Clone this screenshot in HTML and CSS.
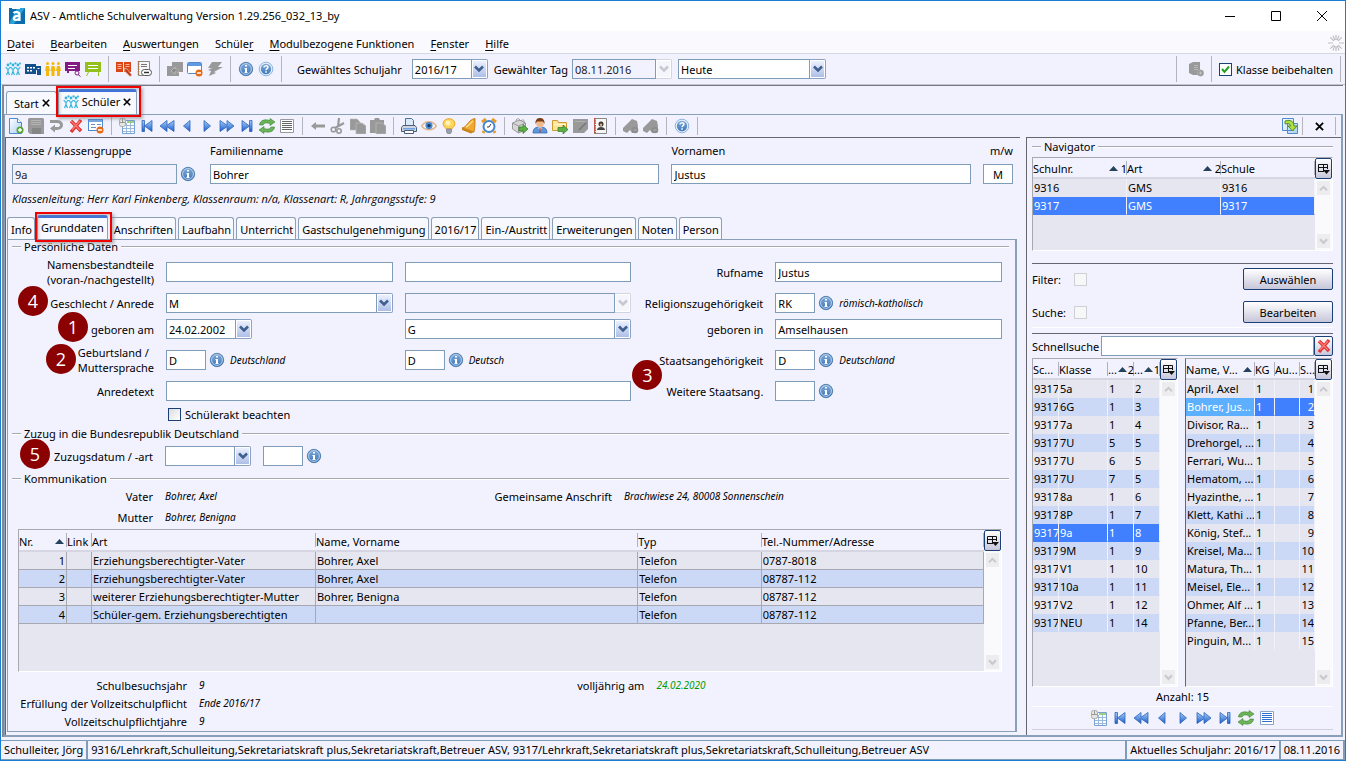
FILE: index.html
```html
<!DOCTYPE html>
<html lang="de">
<head>
<meta charset="utf-8">
<title>ASV - Amtliche Schulverwaltung</title>
<link rel="stylesheet" href="styles.css">
</head>
<body>
<svg class="sprite" aria-hidden="true">
  <defs>
    <linearGradient id="gb" x1="0" y1="0" x2="0" y2="1"><stop offset="0" stop-color="#a6d0fa"/><stop offset="1" stop-color="#1b5cc8"/></linearGradient>
    <linearGradient id="gi" x1="0" y1="0" x2="0" y2="1"><stop offset="0" stop-color="#7fa9d8"/><stop offset="1" stop-color="#3f78bb"/></linearGradient>
    <linearGradient id="gd" x1="0" y1="0" x2="1" y2="1"><stop offset="0" stop-color="#ffffff"/><stop offset="1" stop-color="#a9cff2"/></linearGradient>
  </defs>
  <symbol id="people" viewBox="0 0 16 16"><g fill="#2fb4dc"><circle cx="3" cy="4" r="1.400"/><circle cx="8" cy="4" r="1.400"/><circle cx="13" cy="4" r="1.400"/><circle cx="5.500" cy="2.400" r="1.100"/><circle cx="10.500" cy="2.400" r="1.100"/><circle cx="15" cy="2.400" r="1"/></g><path d="M.7 6l1.600 2h1.400l1.600-2M5.700 6l1.600 2h1.400l1.600-2M10.700 6l1.600 2h1.400l1.600-2M3 8v2.500L1.500 14M3 10.500L4.500 14M8 8v2.500L6.500 14M8 10.500L9.500 14M13 8v2.500L11.500 14M13 10.500l1.500 3.500" fill="none" stroke="#2fb4dc" stroke-width="1.200"/></symbol>
  <symbol id="school" viewBox="0 0 16 16"><path fill="#12508c" d="M0 3h11v2h5v9h-4V9h-1v4H0z"/><path fill="#fff" d="M2 6h2v1.500H2zM5 6h2v1.500H5zM8 6h2v1.500H8zM2 9h2v1.500H2zM5 9h2v1.500H5zM12.500 7h2v1h-2z"/></symbol>
  <symbol id="staff" viewBox="0 0 16 16"><g fill="#f2b90c"><circle cx="2.500" cy="2.500" r="1.500"/><circle cx="8" cy="2.500" r="1.500"/><circle cx="13.500" cy="2.500" r="1.500"/><path d="M1 5h3l1 5H4v5H1v-5H0zM6.500 5h3l1 5h-1v5h-3v-5h-1zM12 5h3l1 5h-1v5h-3v-5h-1z"/></g></symbol>
  <symbol id="board" viewBox="0 0 16 16"><path fill="#841a86" d="M0 1h15v9H0zM2 10h2v2H2z"/><path stroke="#fff" d="M3 4.500h9M3 7.500h7" fill="none"/><circle cx="12" cy="12" r="2" fill="#f2f2ff" stroke="#841a86"/><path d="M13 13.500l2.500 2" stroke="#841a86"/></symbol>
  <symbol id="board2" viewBox="0 0 16 16"><path fill="#93c11c" d="M0 1h16v10h-2v4h-1v-4H4l-2 4H1l2-4H0z"/><path stroke="#fff" d="M3 4.500h10M3 7.500h10" fill="none"/></symbol>
  <symbol id="book" viewBox="0 0 16 16"><path fill="#dc4416" d="M0 1h7v10H0zM8 1h7v10H8z"/><path d="M1.500 3.500h4M1.500 5.500h4M1.500 7.500h4M9.500 3.500h4M9.500 5.500h4" stroke="#f7b49b" fill="none"/><path d="M8 7l3 1 5 6-2 1.500-5-5z" fill="#c03a12" stroke="#f2d2c8" stroke-width=".7"/></symbol>
  <symbol id="notes" viewBox="0 0 16 16"><path fill="#f6f6f6" stroke="#888" d="M2.500 .5h11v14h-11z"/><path stroke="#b0713a" stroke-width="1.500" stroke-dasharray="1.500 1" d="M2.500 0v15"/><path stroke="#777" d="M5 3.500h6M5 5.500h6" fill="none"/><rect x="5.500" y="8.500" width="10" height="6" rx="3" fill="#fff" stroke="#555"/><path stroke="#333" stroke-width="1.500" d="M8 11.500h5"/></symbol>
  <symbol id="stack" viewBox="0 0 16 16"><path fill="#999" d="M5 1h11v10h-4v4H0V5h5z"/><path d="M4 10l4-4v2c3 0 4 1 3 4-1-2-2-2-3-1.500V13z" fill="#888" stroke="#c0c0c0" stroke-width=".8"/></symbol>
  <symbol id="window" viewBox="0 0 16 16"><rect x=".5" y="1.500" width="14" height="11" rx="1" fill="#fff" stroke="#4d8ad2"/><path fill="#5d9ae2" d="M1 2h13v3H1z"/><circle cx="12" cy="12" r="3.500" fill="#e46b15"/><path stroke="#fff" stroke-width="1.500" d="M10 12h4"/></symbol>
  <symbol id="bolt" viewBox="0 0 16 16"><path fill="#999" d="M5 1h10l-4 5h5l-9 5 2 1-7 3 2-5-3-1 4-2H1z"/></symbol>
  <symbol id="info" viewBox="0 0 16 16"><circle cx="8" cy="8" r="6.700" fill="url(#gi)" stroke="#41719f" stroke-width=".8"/><circle cx="8" cy="8" r="5.400" fill="none" stroke="#bcd5f0" stroke-width=".9"/><path stroke="#fff" stroke-width="2" d="M8 4v1.600M8 7v4.500" fill="none"/><path stroke="#fff" d="M6.500 7.500H8M6.500 11.500h3"/></symbol>
  <symbol id="help" viewBox="0 0 16 16"><circle cx="8" cy="8" r="6.800" fill="#e6f0fb" stroke="#76a3d6" stroke-width=".8"/><circle cx="8" cy="8" r="5.200" fill="url(#gi)"/><path d="M6 6.500C6 4.300 10 4.300 10 6.300 10 7.600 8 7.600 8 9.200" fill="none" stroke="#fff" stroke-width="1.400"/><path fill="#fff" d="M7.200 10.300h1.600v1.500H7.200z"/></symbol>
  <symbol id="srv" viewBox="0 0 16 16"><path fill="#999" d="M1 3l4-2h7v13H5l-4-2z"/><path stroke="#b8b8b8" d="M6 4.500h4M6 6.500h4M6 8.500h4"/><circle cx="12.500" cy="12" r="3.200" fill="#999" stroke="#b8b8b8" stroke-width=".6"/><path stroke="#c4c4c4" d="M12.500 10.500v3M11 12h3"/></symbol>
  <symbol id="new" viewBox="0 0 16 16"><path fill="url(#gd)" stroke="#4d8ad2" d="M1.500 .5h8l4 4v11h-12z"/><path fill="#fff" stroke="#4d8ad2" d="M9.500 .5v4h4"/><circle cx="12" cy="12" r="3.500" fill="#57a336"/><path stroke="#fff" stroke-width="1.400" d="M12 10v4M10 12h4"/></symbol>
  <symbol id="save" viewBox="0 0 16 16"><path fill="#999" d="M0 1l1-1h14l1 1v15H2l-2-2z"/><path stroke="#b5b5b5" d="M3 2.500h10M3 4.500h10M3 6.500h10"/><path fill="#858585" d="M4 10h9v6H4z"/></symbol>
  <symbol id="undo" viewBox="0 0 16 16"><path fill="none" stroke="#999" stroke-width="3" d="M2 3.500h7c6 0 6 7 0 7H6"/><path fill="#999" d="M7 6.500v8l-5-4z"/></symbol>
  <symbol id="del" viewBox="0 0 16 16"><path d="M3 3l10 10M13 2L3 14" stroke="#e03030" stroke-width="3.400"/><path d="M3 3l9 9M12 3L4 12" stroke="#ff7a70" stroke-width="1.400"/></symbol>
  <symbol id="form" viewBox="0 0 16 16"><rect x=".5" y="1.500" width="14" height="11" fill="#fff" stroke="#4d8ad2"/><path fill="#76a9e3" d="M1 2h13v2H1z"/><path stroke="#6a8fc0" d="M3 6.500h4M9 6.500h4M3 9.500h5"/><circle cx="12" cy="12" r="3.500" fill="#e46b15"/><path stroke="#fff" stroke-width="1.500" d="M10 12h4"/></symbol>
  <symbol id="sheet" viewBox="0 0 16 16"><path fill="#fff" stroke="#78a1d6" d="M3.500 2.500h12v13h-12z"/><path fill="#9dcf83" d="M8 3h7v2H8z"/><path stroke="#9ab9e0" d="M4 7.500h11M4 10.500h11M4 13.500h11M7.500 5v10M11.500 5v10"/><rect x=".5" y=".5" width="6" height="8" rx="2" fill="#e6e6e0" stroke="#aaa"/><path stroke="#999" d="M3.500 1v3M1 4.500h5"/></symbol>
  <symbol id="first" viewBox="0 0 16 16"><path fill="url(#gb)" stroke="#2c62bd" stroke-width=".8" d="M3 2.500h2.500V8L13 2.500v11L5.500 8v5.500H3z"/></symbol>
  <symbol id="rew" viewBox="0 0 16 16"><path fill="url(#gb)" stroke="#2c62bd" stroke-width=".8" d="M8 2.500v4.800L15 2.500v11L8 8.700v4.800L1 8z"/></symbol>
  <symbol id="prev" viewBox="0 0 16 16"><path fill="url(#gb)" stroke="#2c62bd" stroke-width=".8" d="M11 2.500v11L4.500 8z"/></symbol>
  <symbol id="next" viewBox="0 0 16 16"><path fill="url(#gb)" stroke="#2c62bd" stroke-width=".8" d="M5 2.500v11L11.500 8z"/></symbol>
  <symbol id="ff" viewBox="0 0 16 16"><path fill="url(#gb)" stroke="#2c62bd" stroke-width=".8" d="M8 2.500v4.800L1 2.500v11l7-4.800v4.800L15 8z"/></symbol>
  <symbol id="last" viewBox="0 0 16 16"><path fill="url(#gb)" stroke="#2c62bd" stroke-width=".8" d="M13 2.500h-2.500V8L3 2.500v11L10.500 8v5.500H13z"/></symbol>
  <symbol id="refresh" viewBox="0 0 16 16"><path fill="#6bb558" stroke="#3d8230" stroke-width=".6" d="M.5 7C1 2 6 1 11 2.500V.5L16 4l-5 3.500V5.500C8 4.500 5 4.500 4 7z"/><path fill="#6bb558" stroke="#3d8230" stroke-width=".6" d="M15.500 9C15 14 10 15 5 13.500v2L0 12l5-3.500v2c3 1 6 1 7-1.500z"/></symbol>
  <symbol id="list" viewBox="0 0 16 16"><path fill="#fff" stroke="#999" d="M1.500 1.500h13v13h-13z"/><path stroke="#666" d="M3 3.500h10M3 5.500h10M3 7.500h10M3 9.500h10M3 11.500h10"/></symbol>
  <symbol id="listb" viewBox="0 0 16 16"><path fill="#fff" stroke="#8aa4ca" d="M1.500 1.500h13v13h-13z"/><path stroke="#2d6fd0" d="M3 3.500h10M3 5.500h10M3 7.500h10M3 9.500h10M3 11.500h10"/></symbol>
  <symbol id="back" viewBox="0 0 16 16"><path fill="#999" d="M1 8l5-4v2.500h9v3H6V12z"/></symbol>
  <symbol id="cut" viewBox="0 0 16 16"><path fill="none" stroke="#999" stroke-width="2.200" d="M9 0L8 9M14 5L5 10"/><circle cx="3.500" cy="11.500" r="2.300" fill="none" stroke="#999" stroke-width="1.600"/><circle cx="9" cy="13" r="2.200" fill="none" stroke="#999" stroke-width="1.600"/></symbol>
  <symbol id="copy" viewBox="0 0 16 16"><path fill="#999" stroke="#b5b5b5" stroke-width=".6" d="M0 1h7l3 3v8H0z"/><path fill="#999" stroke="#b9b9b9" stroke-width=".8" d="M6 5h6l4 3v8H6z"/></symbol>
  <symbol id="paste" viewBox="0 0 16 16"><path fill="#999" d="M0 2h4l1-2h4l1 2h4v13H0z"/><path fill="#999" stroke="#b9b9b9" stroke-width=".8" d="M6 5h6l4 3v8H6z"/></symbol>
  <symbol id="print" viewBox="0 0 16 16"><path fill="#dbeafa" stroke="#4c6f9c" d="M4.500 .5h6l2 2v5h-8z"/><path fill="#cfd6e0" stroke="#4c5d78" d="M2 7.500h12l1.500 2v4H.5v-4z"/><path fill="#6ea4e2" d="M2 10h12v1.500H2z"/><path fill="#fff" stroke="#4c5d78" d="M3.500 12.500h9v3h-9z"/></symbol>
  <symbol id="eye" viewBox="0 0 16 16"><path fill="#fff" stroke="#e2b592" stroke-width="1.600" d="M.8 8C4 2.500 12 2.500 15.200 8 12 13 4 13 .8 8z"/><circle cx="8" cy="7.600" r="3.600" fill="#4c8ad0"/><circle cx="8" cy="7.600" r="1.600" fill="#16335c"/></symbol>
  <symbol id="bulb" viewBox="0 0 16 16"><path fill="#ffd65c" stroke="#e8a526" d="M5.500 11C-1 6 3 .7 8 .7S17 6 10.500 11z"/><circle cx="7" cy="5" r="2.500" fill="#fff3b8"/><path fill="#99a1ad" stroke="#697280" stroke-width=".6" d="M5.500 11h5v3l-1 1.500h-3l-1-1.500z"/></symbol>
  <symbol id="bell" viewBox="0 0 16 16"><path fill="#f1a82c" stroke="#b8720d" stroke-width=".8" d="M1 10c5-1 6-7 11-9l2-.5V3c0 4 0 6-1 11z"/><path fill="#c9811a" d="M1 10l12 4-3 1.500L1 12z"/><path stroke="#ffdf8a" stroke-width="1.500" d="M5 9c3-1 4-4 7-6" fill="none"/></symbol>
  <symbol id="clock" viewBox="0 0 16 16"><path stroke="#e99b28" stroke-width="3" d="M1 4l4-3M15 4l-4-3M3 13l-1 2M13 13l1 2"/><circle cx="8" cy="8.500" r="5.500" fill="#fff" stroke="#4388ce" stroke-width="2"/><path stroke="#335" fill="none" d="M10 6L8 9H6"/></symbol>
  <symbol id="boxgo" viewBox="0 0 16 16"><path fill="#d6d6d6" stroke="#888" stroke-width=".8" d="M.5 5l7-3 6 3v7l-7 3-6-4z"/><path stroke="#999" fill="none" d="M.5 5l6 3 7-3M6.500 8v7M4 3c0-3 4-3 4 0M9 3c1-2 4-1 3 1"/><path fill="#5cb046" stroke="#2f7a22" stroke-width=".7" d="M7 9h4V6.500l5 4.500-5 4.500V13H7z"/></symbol>
  <symbol id="user" viewBox="0 0 16 16"><path fill="#5b98dc" stroke="#2b5f9f" stroke-width=".7" d="M1 15c0-5 3-6 7-6s7 1 7 6z"/><circle cx="8" cy="5.500" r="3.800" fill="#f0b98d"/><path fill="#7a3c14" d="M3.500 6C3 1 6 0 8 0s5 1 4.500 6L11 3.500H5z"/><path fill="#fff" d="M6 9.500h4L8 13z"/><path stroke="#c4261c" stroke-width="1.200" d="M8 10v4"/></symbol>
  <symbol id="foldgo" viewBox="0 0 16 16"><path fill="#ffe59a" stroke="#cf9b2c" d="M.5 2.500h5l1 2h8v8H.5z"/><path stroke="#fff5d0" d="M2 6.500h12"/><path fill="#5cb046" stroke="#2f7a22" stroke-width=".7" d="M6 9.500h5V7l5 4.500-5 4.500v-2.500H6z"/></symbol>
  <symbol id="edit" viewBox="0 0 16 16"><path fill="#999" d="M1 1h15v10l-4 4H1z"/><path stroke="#777" stroke-width="1.600" d="M7 12l7-7"/><path stroke="#b1b1b1" d="M3 3.500h10"/></symbol>
  <symbol id="addr" viewBox="0 0 16 16"><path fill="#f6f6f6" stroke="#888" d="M2.500 .5h12v15h-12z"/><path stroke="#d8472a" stroke-width="2" stroke-dasharray="1.500 .8" d="M3 0v16"/><circle cx="9" cy="6" r="2.500" fill="#333"/><path fill="#444" d="M5 12c0-4 8-4 8 0z"/><circle cx="9" cy="6.700" r="1.300" fill="#e2a980"/></symbol>
  <symbol id="tag" viewBox="0 0 16 16"><path fill="#999" d="M0 10l4-4 5-5 5 2 1 5-1 7H9l-2-3-3 3-4-2z"/><circle cx="12" cy="12" r="3.300" fill="#8d8d8d"/><path stroke="#b5b5b5" d="M10.500 12h3"/></symbol>
  <symbol id="export" viewBox="0 0 16 16"><path fill="url(#gd)" stroke="#4d8ad2" d="M.5 .5h11v12H.5zM5.500 5.500h10v10h-10z"/><path fill="#b4dc3a" stroke="#3a8a22" stroke-width=".9" d="M3 3c6-2 9 1 9 5h3l-4.500 5L6 8h2.500c0-2-2-3-5.500-2z"/></symbol>
  <symbol id="chev" viewBox="0 0 10 8"><path fill="none" stroke="currentColor" stroke-width="2.600" d="M1 1.500l4 4 4-4"/></symbol>
  <symbol id="chevup" viewBox="0 0 10 8"><path fill="none" stroke="currentColor" stroke-width="2.200" d="M1 6l4-4 4 4"/></symbol>
  <symbol id="colctl" viewBox="0 0 12 12"><path fill="none" stroke="#111" d="M.5 8.500v-7h9V6M5.500 1v7.500M0 4.500h10M0 8.500h6"/><path fill="#111" d="M5 7h7l-3.500 4z"/></symbol>
  <symbol id="sort" viewBox="0 0 9 5"><path fill="#24425c" d="M0 5l4.500-5L9 5z"/></symbol>
  <symbol id="x" viewBox="0 0 10 10"><path stroke="currentColor" stroke-width="2" d="M1 1l8 8M9 1L1 9"/></symbol>
</svg>

<div class="window">
  <header class="titlebar">
    <svg class="logo" viewBox="0 0 16 16"><path fill="#0d6cab" d="M0 0h16v16H0z"/><path fill="#2ba1d8" d="M8 0h8L5 16H0z"/><path fill="#fff" d="M3 0h8v1H3z"/><path d="M4.500 5C6 3.500 10.500 3.500 10.500 6.500V13M10.500 8C4 7.500 3.500 12 7 12c2 0 3.500-1 3.500-2.500" stroke="#fff" stroke-width="2.200" fill="none"/></svg>
    <h1>ASV - Amtliche Schulverwaltung Version 1.29.256_032_13_by</h1>
    <div class="winbtns">
      <button aria-label="Minimieren"><svg viewBox="0 0 10 10"><path stroke="#000" d="M0 5.500h10"/></svg></button>
      <button aria-label="Maximieren"><svg viewBox="0 0 10 10"><path fill="none" stroke="#000" d="M.5 .5h9v9h-9z"/></svg></button>
      <button aria-label="Schließen"><svg viewBox="0 0 10 10"><path stroke="#000" d="M0 0l10 10M10 0L0 10"/></svg></button>
    </div>
  </header>
  <nav class="menubar">
    <a href="#"><u>D</u>atei</a><a href="#"><u>B</u>earbeiten</a><a href="#"><u>A</u>uswertungen</a><a href="#">Schüle<u>r</u></a><a href="#"><u>M</u>odulbezogene Funktionen</a><a href="#"><u>F</u>enster</a><a href="#"><u>H</u>ilfe</a>
    <svg class="spinner" viewBox="0 0 16 16"><path stroke="#bdbdc2" stroke-width="1.200" d="M8 0v5M8 11v5M0 8h5M11 8h5M2.300 2.300l3.500 3.500M10.200 10.200l3.500 3.500M13.700 2.300l-3.500 3.500M5.800 10.200l-3.500 3.500M5 .6l1.800 4.600M9.200 10.800L11 15.400M11 .6L9.200 5.200M6.800 10.800L5 15.400"/></svg>
  </nav>
  <div class="mainbar">
    <button class="ib" aria-label="Schüler"><svg><use href="#people"/></svg></button>
    <button class="ib" aria-label="Schule"><svg><use href="#school"/></svg></button>
    <button class="ib" aria-label="Lehrer"><svg><use href="#staff"/></svg></button>
    <button class="ib" aria-label="Klassen"><svg><use href="#board"/></svg></button>
    <button class="ib" aria-label="Unterricht"><svg><use href="#board2"/></svg></button>
    <i class="sep"></i>
    <button class="ib" aria-label="Buch"><svg><use href="#book"/></svg></button>
    <button class="ib" aria-label="Notizen"><svg><use href="#notes"/></svg></button>
    <i class="sep"></i>
    <button class="ib" aria-label="Stapel"><svg><use href="#stack"/></svg></button>
    <button class="ib" aria-label="Fenster schließen"><svg><use href="#window"/></svg></button>
    <button class="ib" aria-label="Blitz"><svg><use href="#bolt"/></svg></button>
    <i class="sep"></i>
    <button class="ib" aria-label="Info"><svg><use href="#info"/></svg></button>
    <button class="ib" aria-label="Hilfe"><svg><use href="#help"/></svg></button>
    <i class="sep"></i>
    <label class="yearlabel" for="jahr">Gewähltes Schuljahr</label>
    <span class="combo year"><select id="jahr"><option>2016/17</option></select><span class="arrow"><svg><use href="#chev"/></svg></span></span>
    <label class="daylabel" for="tag-feld">Gewählter Tag</label>
    <span class="combo day off"><input id="tag-feld" value="08.11.2016" disabled><button class="arrow" disabled aria-label="Kalender"><svg><use href="#chev"/></svg></button></span>
    <span class="combo today"><select aria-label="Tag"><option>Heute</option></select><span class="arrow"><svg><use href="#chev"/></svg></span></span>
    <i class="sep push"></i>
    <button class="ib server" aria-label="Server"><svg><use href="#srv"/></svg></button>
    <i class="sep"></i>
    <label class="keep"><input type="checkbox" class="cb" checked>Klasse beibehalten</label>
    <i class="sep end"></i>
  </div>

  <main class="desk">
    <div class="doctabs">
      <div class="doctab">Start <svg><use href="#x"/></svg></div>
      <div class="doctab active"><svg class="pic"><use href="#people"/></svg>Schüler <svg><use href="#x"/></svg><i class="redbox"></i></div>
    </div>
    <div class="frame">
      <div class="modbar">
        <button class="ib" aria-label="Neu"><svg><use href="#new"/></svg></button>
        <button class="ib" aria-label="Speichern"><svg><use href="#save"/></svg></button>
        <button class="ib" aria-label="Rückgängig"><svg><use href="#undo"/></svg></button>
        <button class="ib" aria-label="Löschen"><svg><use href="#del"/></svg></button>
        <button class="ib" aria-label="Formular"><svg><use href="#form"/></svg></button>
        <i class="sep"></i>
        <button class="ib" aria-label="Tabelle"><svg><use href="#sheet"/></svg></button>
        <button class="ib" aria-label="Erster"><svg><use href="#first"/></svg></button>
        <button class="ib" aria-label="Schnell zurück"><svg><use href="#rew"/></svg></button>
        <button class="ib" aria-label="Zurück"><svg><use href="#prev"/></svg></button>
        <button class="ib" aria-label="Weiter"><svg><use href="#next"/></svg></button>
        <button class="ib" aria-label="Schnell weiter"><svg><use href="#ff"/></svg></button>
        <button class="ib" aria-label="Letzter"><svg><use href="#last"/></svg></button>
        <button class="ib" aria-label="Aktualisieren"><svg><use href="#refresh"/></svg></button>
        <button class="ib" aria-label="Liste"><svg><use href="#list"/></svg></button>
        <i class="sep"></i>
        <button class="ib" aria-label="Pfeil"><svg><use href="#back"/></svg></button>
        <button class="ib" aria-label="Ausschneiden"><svg><use href="#cut"/></svg></button>
        <button class="ib" aria-label="Kopieren"><svg><use href="#copy"/></svg></button>
        <button class="ib" aria-label="Einfügen"><svg><use href="#paste"/></svg></button>
        <i class="sep"></i>
        <button class="ib" aria-label="Drucken"><svg><use href="#print"/></svg></button>
        <button class="ib" aria-label="Vorschau"><svg><use href="#eye"/></svg></button>
        <button class="ib" aria-label="Tipp"><svg><use href="#bulb"/></svg></button>
        <button class="ib" aria-label="Glocke"><svg><use href="#bell"/></svg></button>
        <button class="ib" aria-label="Wecker"><svg><use href="#clock"/></svg></button>
        <i class="sep"></i>
        <button class="ib" aria-label="Paket"><svg><use href="#boxgo"/></svg></button>
        <button class="ib" aria-label="Person"><svg><use href="#user"/></svg></button>
        <button class="ib" aria-label="Ordner"><svg><use href="#foldgo"/></svg></button>
        <button class="ib" aria-label="Bearbeiten"><svg><use href="#edit"/></svg></button>
        <button class="ib" aria-label="Adressbuch"><svg><use href="#addr"/></svg></button>
        <i class="sep"></i>
        <button class="ib" aria-label="Marke hinzufügen"><svg><use href="#tag"/></svg></button>
        <button class="ib" aria-label="Marke entfernen"><svg><use href="#tag"/></svg></button>
        <i class="sep"></i>
        <button class="ib" aria-label="Hilfe"><svg><use href="#help"/></svg></button>
        <i class="sep"></i>
        <button class="ib push" aria-label="Export"><svg><use href="#export"/></svg></button>
        <i class="sep tight"></i>
        <button class="ib close" aria-label="Schließen"><svg><use href="#x"/></svg></button>
        <i class="sep tight"></i>
      </div>

      <div class="split">
        <section class="detail">
          <div class="head">
            <label for="klasse">Klasse / Klassengruppe</label><label for="fam">Familienname</label><label for="vor">Vornamen</label><label for="mw" class="right">m/w</label>
            <span class="withinfo"><input id="klasse" class="grow" value="9a" readonly><svg class="inf"><use href="#info"/></svg></span>
            <input id="fam" value="Bohrer"><input id="vor" value="Justus"><input id="mw" class="center" value="M">
          </div>
          <p class="note">Klassenleitung: Herr Karl Finkenberg, Klassenraum: n/a, Klassenart: R, Jahrgangsstufe: 9</p>
          <div class="tabs">
            <button>Info</button><button class="active">Grunddaten<i class="redbox"></i></button><button>Anschriften</button><button>Laufbahn</button><button>Unterricht</button><button>Gastschulgenehmigung</button><button>2016/17</button><button>Ein-/Austritt</button><button>Erweiterungen</button><button>Noten</button><button>Person</button>
          </div>
          <div class="sheet">
            <h2 class="group">Persönliche Daten</h2>
            <div class="form">
              <label for="nb1">Namensbestandteile<br>(voran-/nachgestellt)</label><input id="nb1"><input aria-label="nachgestellt"><label for="ruf">Rufname</label><input id="ruf" value="Justus">

              <label for="ges"><b class="num n4">4</b>Geschlecht / Anrede</label>
              <span class="combo"><select id="ges"><option>M</option></select><span class="arrow"><svg><use href="#chev"/></svg></span></span>
              <span class="combo off"><select aria-label="Anrede" disabled><option></option></select><span class="arrow"><svg><use href="#chev"/></svg></span></span>
              <label for="rel">Religionszugehörigkeit</label>
              <span class="code"><input id="rel" value="RK"><svg class="inf"><use href="#info"/></svg><em>römisch-katholisch</em></span>

              <label for="geb"><b class="num n1">1</b>geboren am</label>
              <span class="combo date"><input id="geb" value="24.02.2002"><button class="arrow" aria-label="Kalender"><svg><use href="#chev"/></svg></button></span>
              <span class="combo"><select aria-label="Art"><option>G</option></select><span class="arrow"><svg><use href="#chev"/></svg></span></span>
              <label for="ort">geboren in</label><input id="ort" value="Amselhausen">

              <label for="land"><b class="num n2">2</b><span class="two">Geburtsland /<br>Muttersprache</span></label>
              <span class="code"><input id="land" value="D"><svg class="inf"><use href="#info"/></svg><em>Deutschland</em></span>
              <span class="code"><input aria-label="Muttersprache" value="D"><svg class="inf"><use href="#info"/></svg><em>Deutsch</em></span>
              <label for="sta">Staatsangehörigkeit</label>
              <span class="code"><input id="sta" value="D"><svg class="inf"><use href="#info"/></svg><em>Deutschland</em></span>

              <label for="anr">Anredetext</label><input id="anr" class="wide">
              <label for="wst"><b class="num n3">3</b>Weitere Staatsang.</label>
              <span class="code"><input id="wst"><svg class="inf"><use href="#info"/></svg></span>

              <label class="akt"><input type="checkbox" class="cb">Schülerakt beachten</label>
            </div>
            <h2 class="group">Zuzug in die Bundesrepublik Deutschland</h2>
            <div class="zuzug">
              <label for="zuz"><b class="num n5">5</b>Zuzugsdatum / -art</label>
              <span class="combo date"><input id="zuz"><button class="arrow" aria-label="Kalender"><svg><use href="#chev"/></svg></button></span>
              <span class="code"><input aria-label="Zuzugsart"><svg class="inf"><use href="#info"/></svg></span>
            </div>
            <h2 class="group">Kommunikation</h2>
            <div class="parents">
              <span>Vater</span><em>Bohrer, Axel</em><span>Gemeinsame Anschrift</span><em>Brachwiese 24, 80008 Sonnenschein</em>
              <span>Mutter</span><em>Bohrer, Benigna</em>
            </div>
            <div class="grid kom">
              <div class="cells">
                <table>
                  <colgroup><col class="w48"><col class="w25"><col class="c-art"><col class="c-name"><col class="c-typ"><col></colgroup>
                  <thead><tr><th><span>Nr.<svg><use href="#sort"/></svg></span></th><th>Link</th><th>Art</th><th>Name, Vorname</th><th>Typ</th><th>Tel.-Nummer/Adresse</th></tr></thead>
                  <tbody>
                    <tr><td class="right">1</td><td></td><td>Erziehungsberechtigter-Vater</td><td>Bohrer, Axel</td><td>Telefon</td><td>0787-8018</td></tr>
                    <tr><td class="right">2</td><td></td><td>Erziehungsberechtigter-Vater</td><td>Bohrer, Axel</td><td>Telefon</td><td>08787-112</td></tr>
                    <tr><td class="right">3</td><td></td><td>weiterer Erziehungsberechtigter-Mutter</td><td>Bohrer, Benigna</td><td>Telefon</td><td>08787-112</td></tr>
                    <tr><td class="right">4</td><td></td><td>Schüler-gem. Erziehungsberechtigten</td><td></td><td>Telefon</td><td>08787-112</td></tr>
                  </tbody>
                </table>
              </div>
              <div class="bar"><button class="ctl" aria-label="Spalten"><svg><use href="#colctl"/></svg></button><button class="sc" aria-label="Auf"><svg><use href="#chevup"/></svg></button><button class="sc down" aria-label="Ab"><svg><use href="#chev"/></svg></button></div>
            </div>
            <div class="facts">
              <span>Schulbesuchsjahr</span><em>9</em><span>volljährig am</span><em class="green">24.02.2020</em>
              <span>Erfüllung der Vollzeitschulpflicht</span><em>Ende 2016/17</em><span></span><span></span>
              <span>Vollzeitschulpflichtjahre</span><em>9</em>
            </div>
          </div>
        </section>

        <aside class="side">
          <h2 class="group">Navigator</h2>
          <div class="grid nav">
            <div class="cells">
              <table class="plain">
                <thead><tr><th><span>Schulnr.<svg><use href="#sort"/></svg>1</span></th><th><span>Art<svg><use href="#sort"/></svg>2</span></th><th>Schule</th></tr></thead>
                <tbody><tr><td>9316</td><td>GMS</td><td>9316</td></tr><tr class="sel"><td>9317</td><td>GMS</td><td>9317</td></tr></tbody>
              </table>
            </div>
            <div class="bar"><button class="ctl" aria-label="Spalten"><svg><use href="#colctl"/></svg></button><button class="sc" aria-label="Auf"><svg><use href="#chevup"/></svg></button><button class="sc down" aria-label="Ab"><svg><use href="#chev"/></svg></button></div>
          </div>
          <div class="filters">
            <label for="fil">Filter:</label><input type="checkbox" class="cb off" id="fil" disabled><button class="push">Auswählen</button>
            <label for="suc">Suche:</label><input type="checkbox" class="cb off" id="suc" disabled><button class="push">Bearbeiten</button>
          </div>
          <div class="quick"><label for="schnell">Schnellsuche</label><input id="schnell" class="grow"><button class="clear" aria-label="Leeren"><svg><use href="#del"/></svg></button></div>
          <div class="lists">
            <div class="grid kl">
              <div class="cells">
                <table class="plain">
                  <colgroup><col class="w26"><col><col class="w26"><col class="w26"></colgroup>
                  <thead><tr><th>Sc...</th><th>Klasse</th><th><span class="tightsort">...<svg><use href="#sort"/></svg>2</span></th><th><span class="tightsort">...<svg><use href="#sort"/></svg>1</span></th></tr></thead>
                  <tbody>
                    <tr><td>9317</td><td>5a</td><td>1</td><td>2</td></tr>
                    <tr><td>9317</td><td>6G</td><td>1</td><td>3</td></tr>
                    <tr><td>9317</td><td>7a</td><td>1</td><td>4</td></tr>
                    <tr><td>9317</td><td>7U</td><td>5</td><td>5</td></tr>
                    <tr><td>9317</td><td>7U</td><td>6</td><td>5</td></tr>
                    <tr><td>9317</td><td>7U</td><td>7</td><td>5</td></tr>
                    <tr><td>9317</td><td>8a</td><td>1</td><td>6</td></tr>
                    <tr><td>9317</td><td>8P</td><td>1</td><td>7</td></tr>
                    <tr class="sel"><td>9317</td><td>9a</td><td>1</td><td>8</td></tr>
                    <tr><td>9317</td><td>9M</td><td>1</td><td>9</td></tr>
                    <tr><td>9317</td><td>V1</td><td>1</td><td>10</td></tr>
                    <tr><td>9317</td><td>10a</td><td>1</td><td>11</td></tr>
                    <tr><td>9317</td><td>V2</td><td>1</td><td>12</td></tr>
                    <tr><td>9317</td><td>NEU</td><td>1</td><td>14</td></tr>
                  </tbody>
                </table>
              </div>
              <div class="bar"><button class="ctl" aria-label="Spalten"><svg><use href="#colctl"/></svg></button><button class="sc" aria-label="Auf"><svg><use href="#chevup"/></svg></button><button class="sc down" aria-label="Ab"><svg><use href="#chev"/></svg></button></div>
            </div>
            <div class="grid pu">
              <div class="cells">
                <table class="plain">
                  <colgroup><col><col class="w20"><col class="w25"><col class="w15"></colgroup>
                  <thead><tr><th><span>Name, V...<svg><use href="#sort"/></svg></span></th><th>KG</th><th>Au...</th><th>S...</th></tr></thead>
                  <tbody>
                    <tr><td>April, Axel</td><td>1</td><td></td><td>1</td></tr>
                    <tr class="sel"><td class="focus">Bohrer, Jus...</td><td>1</td><td></td><td>2</td></tr>
                    <tr><td>Divisor, Ra...</td><td>1</td><td></td><td>3</td></tr>
                    <tr><td>Drehorgel, ...</td><td>1</td><td></td><td>4</td></tr>
                    <tr><td>Ferrari, Wu...</td><td>1</td><td></td><td>5</td></tr>
                    <tr><td>Hematom, ...</td><td>1</td><td></td><td>6</td></tr>
                    <tr><td>Hyazinthe, ...</td><td>1</td><td></td><td>7</td></tr>
                    <tr><td>Klett, Kathi ...</td><td>1</td><td></td><td>8</td></tr>
                    <tr><td>König, Stef...</td><td>1</td><td></td><td>9</td></tr>
                    <tr><td>Kreisel, Ma...</td><td>1</td><td></td><td>10</td></tr>
                    <tr><td>Matura, Th...</td><td>1</td><td></td><td>11</td></tr>
                    <tr><td>Meisel, Ele...</td><td>1</td><td></td><td>12</td></tr>
                    <tr><td>Ohmer, Alf ...</td><td>1</td><td></td><td>13</td></tr>
                    <tr><td>Pfanne, Ber...</td><td>1</td><td></td><td>14</td></tr>
                    <tr><td>Pinguin, M...</td><td>1</td><td></td><td>15</td></tr>
                  </tbody>
                </table>
              </div>
              <div class="bar"><button class="ctl" aria-label="Spalten"><svg><use href="#colctl"/></svg></button><button class="sc" aria-label="Auf"><svg><use href="#chevup"/></svg></button><button class="sc down" aria-label="Ab"><svg><use href="#chev"/></svg></button></div>
            </div>
          </div>
          <p class="count">Anzahl: 15</p>
          <div class="navbar">
            <button class="ib" aria-label="Tabelle"><svg><use href="#sheet"/></svg></button>
            <button class="ib" aria-label="Erster"><svg><use href="#first"/></svg></button>
            <button class="ib" aria-label="Schnell zurück"><svg><use href="#rew"/></svg></button>
            <button class="ib" aria-label="Zurück"><svg><use href="#prev"/></svg></button>
            <button class="ib" aria-label="Weiter"><svg><use href="#next"/></svg></button>
            <button class="ib" aria-label="Schnell weiter"><svg><use href="#ff"/></svg></button>
            <button class="ib" aria-label="Letzter"><svg><use href="#last"/></svg></button>
            <button class="ib" aria-label="Aktualisieren"><svg><use href="#refresh"/></svg></button>
            <button class="ib" aria-label="Liste"><svg><use href="#listb"/></svg></button>
          </div>
        </aside>
      </div>
    </div>
  </main>
  <footer class="status"><span>Schulleiter, Jörg</span><span class="grow">9316/Lehrkraft,Schulleitung,Sekretariatskraft plus,Sekretariatskraft,Betreuer ASV, 9317/Lehrkraft,Sekretariatskraft plus,Sekretariatskraft,Schulleitung,Betreuer ASV</span><span>Aktuelles Schuljahr: 2016/17</span><span>08.11.2016</span></footer>
</div>
</body>
</html>
```

FILE: styles.css
```css
*, ::before, ::after { box-sizing: border-box; }
body, h1, h2, p { margin: 0; font-weight: normal; }
body {
  font: 11px/15px "Noto Sans", "Open Sans", sans-serif;
  color: #000;
  background: #f2f2ff;
}
input, select, button { font: inherit; color: inherit; margin: 0; min-width: 0; }
button { padding: 0; border: 0; background: none; }
svg { display: block; flex: none; }
a { color: inherit; text-decoration: none; }
u { text-underline-offset: 2px; }
.sprite { position: absolute; width: 0; height: 0; }
.right { text-align: right; }
.center { text-align: center; }
.grow { flex: 1; min-width: 0; }

.window {
  display: flex;
  flex-direction: column;
  min-height: 100vh;
  border: 1px solid #1a7fd4;
}

/* Title and menu */
.titlebar { display: flex; align-items: center; height: 30px; padding-left: 8px; background: #fff; }
.titlebar h1 { margin-left: 5px; font-size: 11px; line-height: 16px; }
.logo { width: 16px; height: 16px; }
.winbtns { display: flex; margin-left: auto; }
.winbtns button { display: flex; align-items: center; justify-content: center; width: 46px; height: 28px; }
.winbtns svg { width: 10px; height: 10px; }
.menubar {
  display: flex;
  align-items: center;
  gap: 16px;
  height: 23px;
  padding: 2px 1px 0 6px;
  background: #f9f9fe;
  border-bottom: 1px solid #d6d6e6;
}
.spinner { width: 16px; height: 16px; margin-left: auto; }

/* Toolbars */
.mainbar {
  display: flex;
  align-items: center;
  gap: 4px;
  height: 31px;
  padding: 0 4px;
  border-bottom: 1px solid #c4c4d0;
}
.ib { flex: none; width: 16px; height: 16px; }
.ib svg { width: 16px; height: 16px; }
.sep { flex: none; width: 1px; height: 26px; margin: 0 3px; background: #b4b4bc; }
.sep.end { margin-right: 0; }
.sep.tight { margin: 0; }
.push, .sep.push { margin-left: auto; }
.yearlabel { margin: 0 6px 0 8px; }
.daylabel { margin-left: 2px; }
.server { margin-left: 4px; }
.keep { display: flex; align-items: center; gap: 4px; }
.cb {
  appearance: none;
  flex: none;
  width: 13px;
  height: 13px;
  border: 1px solid #1c3f78;
  background: linear-gradient(135deg, #dcdce0, #fff);
}
.cb:checked {
  background: #fff url("data:image/svg+xml,%3Csvg xmlns='http://www.w3.org/2000/svg' viewBox='0 0 11 11'%3E%3Cpath d='M2 5l2.500 3L9 2.500' fill='none' stroke='%2321a121' stroke-width='2'/%3E%3C/svg%3E");
}
.cb.off { border-color: #cfcfd8; background: #f7f7f7; }

/* Fields */
input:not(.cb), select {
  height: 20px;
  padding: 0 2px;
  border: 1px solid #7f9db9;
  border-radius: 0;
  background: #fff;
}
input[readonly], input:disabled:not(.cb), select:disabled { background: #f2f2ff; color: #222; opacity: 1; }
.combo { display: flex; min-width: 0; height: 20px; }
.combo select, .combo input { appearance: none; flex: 1; width: 100%; }
.arrow {
  display: flex;
  flex: none;
  align-items: center;
  justify-content: center;
  width: 16px;
  height: 20px;
  color: #3f5f8f;
  border: 1px solid #8ba2c4;
  border-left-width: 0;
  border-radius: 0 2px 2px 0;
  background: linear-gradient(#f0f4ff, #a9bbe6);
  box-shadow: inset 0 0 0 1px #fff;
}
.arrow svg { width: 10px; height: 8px; }
.off .arrow { color: #c8c8d2; border-color: #d4d4e0; background: #f5f5fc; }
.year { width: 76px; }
.day { width: 100px; }
.today { width: 148px; margin-left: 2px; }

/* Document tabs and frame */
.desk {
  display: flex;
  flex: 1;
  flex-direction: column;
  margin: 0 2px 3px 1px;
  border-top: 1px solid #77777f;
  border-left: 2px solid #888890;
}
.doctabs { display: flex; align-items: flex-end; gap: 1px; height: 28px; padding-left: 2px; }
.doctab {
  position: relative;
  display: flex;
  align-items: center;
  gap: 3px;
  height: 23px;
  padding: 0 6px 0 7px;
  background: #f8f8ff;
  border: 1px solid #8aa0b8;
  border-bottom: 0;
  border-radius: 3px 3px 0 0;
}
.doctab svg { width: 8px; height: 8px; }
.doctab .pic { width: 16px; height: 16px; }
.doctab.active { height: 25px; padding: 0 5px 3px 4px; border-top: 3px solid #3d73e0; }
.redbox {
  position: absolute;
  inset: -6px -5px -3px -3px;
  border: 2px solid #f00000;
  box-shadow: 2px 2px 3px #80808099, inset 2px 2px 3px #80808066;
  z-index: 2;
}
.frame {
  display: flex;
  flex: 1;
  flex-direction: column;
  border: 1px solid #8aa0b8;
  border-right-width: 2px;
  border-bottom-width: 2px;
}
.modbar { display: flex; align-items: center; gap: 4px; height: 22px; padding: 0 5px 0 3px; }
.modbar .sep { height: 18px; }
.close { width: 22px; padding: 0 6px; }
.modbar .close { margin-left: 2px; }
.close svg { width: 9px; height: 9px; margin-top: 1px; }
.split { display: flex; flex: 1; }

/* Student detail */
.detail {
  display: flex;
  flex: 1;
  flex-direction: column;
  min-width: 0;
  border-top: 1px solid #66666e;
  border-left: 1px solid #66666e;
  margin-right: 6px;
}
.head {
  display: grid;
  grid-template-columns: 186px 3fr 2fr 30px;
  gap: 6px 12px;
  padding: 5px 7px 0 6px;
}
.withinfo { display: flex; align-items: center; gap: 3px; padding-right: 2px; }
.inf { width: 16px; height: 16px; }
.note { margin: 7px 6px 9px; font-style: italic; font-family: "Open Sans", "Noto Sans", sans-serif; }
.tabs { display: flex; align-items: flex-end; gap: 2px; height: 24px; padding-left: 1px; }
.tabs button {
  position: relative;
  height: 22px;
  padding: 2px 2px 0 3px;
  white-space: nowrap;
  background: #f8f8ff;
  border: 1px solid #8aa0b8;
  border-bottom: 0;
  border-radius: 3px 3px 0 0;
}
.tabs button.active { height: 24px; border-top: 3px solid #3d73e0; padding: 0 3px 2px; }
.sheet {
  display: flex;
  flex: 1;
  flex-direction: column;
  margin: 0 3px 3px 1px;
  padding: 0 6px 0 4px;
  border: 1px solid #8aa0b8;
  border-right-width: 2px;
}
.group { display: flex; align-items: center; gap: 3px; font: inherit; line-height: 13px; }
.group::before, .group::after { content: ""; height: 2px; background: #a8a8b0; border-bottom: 1px solid #fff; }
.group::before { width: 9px; }
.group::after { flex: 1; }
.form {
  position: relative;
  display: grid;
  grid-template-columns: 142px 1fr 1fr 120px 1fr;
  grid-template-rows: 30px 32px 20px 42px 20px 26px;
  column-gap: 12px;
  align-items: center;
  padding: 4px 7px 0 0;
}
.form > label, .zuzug > label { position: relative; text-align: right; }
.form > .akt { grid-column: 2; display: flex; align-items: center; gap: 4px; padding-left: 2px; text-align: left; }
.two { display: inline-block; text-align: left; }
.wide { grid-column: span 2; }
.combo.date { width: 86px; }
.code { display: flex; align-items: center; gap: 3px; }
.code input { width: 40px; }
.code em { margin-left: 2px; }
em { font-size: 10px; }
.num {
  position: absolute;
  top: 50%;
  width: 30px;
  height: 30px;
  margin-top: -17px;
  border-radius: 15px;
  background: #8b0000;
  color: #fff;
  font: 18px/30px "Open Sans", "Noto Sans", sans-serif;
  text-align: center;
  z-index: 1;
}
.n1 { right: 66px; }
.n2 { right: 78px; margin-top: -16px; }
.n3 { right: 101px; margin-top: -31px; }
.n4 { right: 106px; }
.n5 { right: 103px; }
.zuzug { display: flex; align-items: center; gap: 12px; height: 32px; }
.zuzug > label { width: 141px; }
.parents {
  display: grid;
  grid-template-columns: 141px 9fr 120px 11fr;
  gap: 6px 12px;
  padding: 4px 0;
}
.parents span, .facts span { text-align: right; }
.facts {
  display: grid;
  grid-template-columns: 175px 8fr 120px 9fr;
  gap: 3px 12px;
  padding: 6px 0 2px;
}
.green { color: #009a00; }

/* Tables */
.grid { display: flex; border: 1px solid #a8a8b0; border-right-color: #fff; border-bottom-color: #fff; background: #e6e6f0; }
.cells { flex: 1; min-width: 0; }
table { width: 100%; table-layout: fixed; border-collapse: separate; border-spacing: 0; }
th, td { padding: 0 1px; overflow: hidden; white-space: nowrap; text-align: left; font-weight: normal; }
th {
  height: 21px;
  padding: 2px 0 0;
  background: linear-gradient(#b0b0bc, #b0b0bc) right center / 1px 14px no-repeat #f2f2ff;
  border-bottom: 2px solid #d6d6e2;
}
th span { display: flex; align-items: center; }
th svg { width: 9px; height: 5px; margin: 0 3px 0 auto; }
.tightsort svg { margin-right: 1px; }
td { height: 18px; border-right: 1px solid #f2f2fa; border-bottom: 1px solid #f2f2fa; line-height: 17px; }
td.right { text-align: right; }
.kom { flex: 1; margin: 0 7px 0 6px; }
.kom th { height: 22px; }
.kom td { border-color: #a8a8b0; }
tbody tr:nth-child(even) { background: #ccd9f6; }
tbody tr.sel { background: #4080ff; color: #fff; }
.sel .focus { background: #5cb0ff; }
.plain td { border-bottom-color: transparent; }
.w15 { width: 15px; } .w20 { width: 20px; } .w25 { width: 25px; } .w26 { width: 26px; } .w48 { width: 48px; }
.c-art { width: 23.2%; } .c-name { width: 33.4%; } .c-typ { width: 12.8%; }
.bar { display: flex; flex: none; flex-direction: column; width: 17px; background: #fafafc; }
.ctl {
  display: flex;
  align-items: center;
  justify-content: center;
  width: 17px;
  height: 21px;
  border: 1px solid #1c3f78;
  border-radius: 2px;
  background: linear-gradient(#fff, #c6c6da);
}
.ctl svg { width: 12px; height: 12px; }
.sc { display: flex; align-items: center; justify-content: center; width: 13px; height: 14px; margin: 2px; color: #c9c9cf; background: #ededf0; }
.sc svg { width: 9px; height: 7px; }
.sc.down { margin-top: auto; }

/* Right side */
.side {
  display: flex;
  flex: none;
  flex-direction: column;
  width: 315px;
  padding: 2px 8px 5px 5px;
  border-top: 1px solid #66666e;
  border-left: 1px solid #66666e;
}
.nav { height: 94px; margin-top: 4px; }
.filters {
  display: grid;
  grid-template-columns: 42px 13px 1fr;
  gap: 11px 0;
  align-items: center;
  margin-top: 12px;
  padding: 4px 0;
  border-top: 1px solid #66666e;
  border-bottom: 1px solid #fff;
}
.filters button { width: 90px; height: 22px; border: 1px solid #1c3f78; border-radius: 2px; background: linear-gradient(#fff, #c6c6da); }
.quick { display: flex; align-items: center; margin-top: 5px; padding: 2px 0; border-top: 1px solid #66666e; }
.quick label { width: 69px; }
.clear { display: flex; align-items: center; justify-content: center; width: 19px; height: 20px; border: 1px solid #1c3f78; border-radius: 2px; background: linear-gradient(#fff, #c6c6da); }
.clear svg { width: 16px; height: 16px; }
.lists { display: flex; flex: 1; gap: 7px; }
.kl { flex: 146; }
.pu { flex: 148; border-left-color: #66666e; }
.pu td:last-child { padding: 0; text-align: right; }
.count { padding: 2px 0; text-align: center; }
.navbar { display: flex; justify-content: center; gap: 5px; padding: 3px 0; border-top: 1px solid #fff; border-bottom: 1px solid #cfcfe0; }

.status { display: flex; height: 20px; border-top: 1px solid #7f9db9; border-bottom: 1px solid #7f9db9; background: #f2f2ff; line-height: 18px; white-space: nowrap; }
.status span { padding: 0 3px; overflow: hidden; border-right: 2px solid #7f9db9; }
```
